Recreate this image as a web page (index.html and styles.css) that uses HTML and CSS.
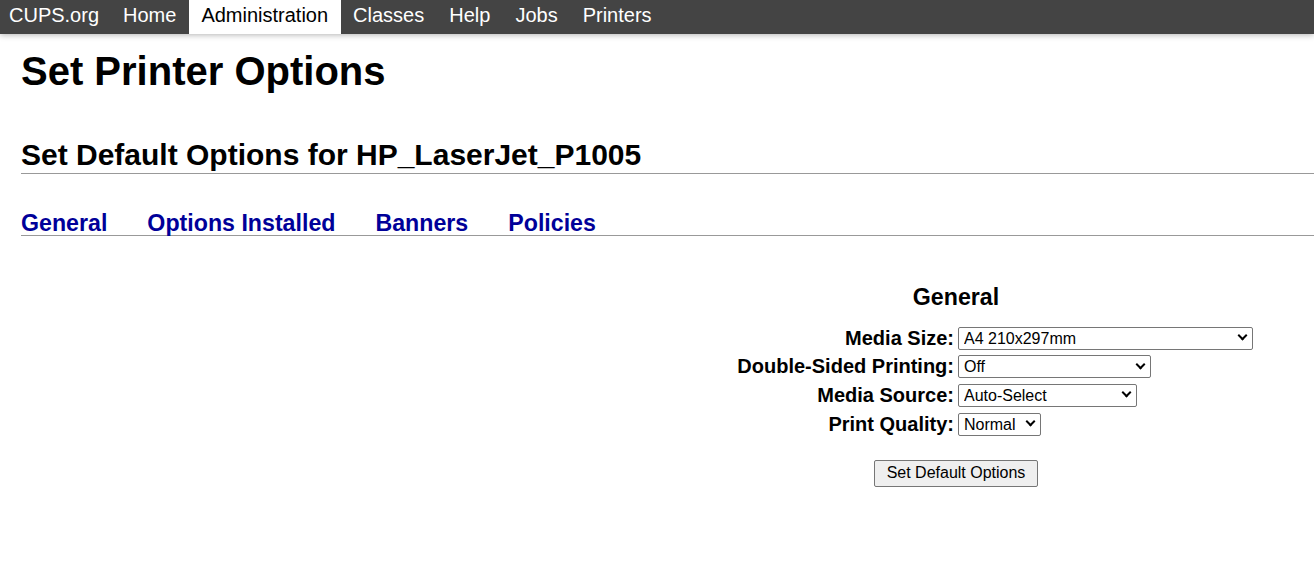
FILE: index.html
```html
<!DOCTYPE html>
<html lang="en">
<head>
  <meta charset="UTF-8">
  <title>Set Printer Options - CUPS</title>
  <link rel="stylesheet" href="styles.css">
</head>
<body>
  <header class="header">
    <nav class="nav">
      <a href="#" class="nav-link nav-brand">CUPS.org</a>
      <a href="#" class="nav-link">Home</a>
      <a href="#" class="nav-link active">Administration</a>
      <a href="#" class="nav-link">Classes</a>
      <a href="#" class="nav-link">Help</a>
      <a href="#" class="nav-link">Jobs</a>
      <a href="#" class="nav-link">Printers</a>
    </nav>
  </header>

  <main class="page">
    <h1 class="title">Set Printer Options</h1>
    <h2 class="subtitle">Set Default Options for HP_LaserJet_P1005</h2>

    <div class="tabs">
      <a href="#" class="tab">General</a>
      <a href="#" class="tab">Options Installed</a>
      <a href="#" class="tab">Banners</a>
      <a href="#" class="tab">Policies</a>
    </div>

    <form class="options">
      <h3 class="options-title">General</h3>
      <div class="options-grid">
        <label class="option-label" for="media">Media Size:</label>
        <span class="select-wrap">
          <select id="media" class="select select-media">
            <option>A4 210x297mm</option>
          </select>
        </span>

        <label class="option-label" for="duplex">Double-Sided Printing:</label>
        <span class="select-wrap">
          <select id="duplex" class="select select-duplex">
            <option>Off</option>
          </select>
        </span>

        <label class="option-label" for="source">Media Source:</label>
        <span class="select-wrap">
          <select id="source" class="select select-source">
            <option>Auto-Select</option>
          </select>
        </span>

        <label class="option-label" for="quality">Print Quality:</label>
        <span class="select-wrap">
          <select id="quality" class="select select-quality">
            <option>Normal</option>
          </select>
        </span>
      </div>
      <div class="options-actions">
        <button type="button" class="button">Set Default Options</button>
      </div>
    </form>
  </main>
</body>
</html>
```

FILE: styles.css
```css
body {
  margin: 0;
  font-family: "Liberation Sans", Arial, sans-serif;
  color: #000;
  background: #fff;
}

/* top navigation bar */
.header {
  background: #444;
  height: 34px;
  box-shadow: 0 1px 6px rgba(0, 0, 0, 0.3);
  position: relative;
}
.nav {
  display: flex;
  height: 100%;
}
.nav-link {
  display: block;
  padding: 0 12.5px;
  line-height: 30px;
  font-size: 20px;
  color: #fff;
  text-decoration: none;
}
.nav-brand {
  padding-left: 9px;
  padding-right: 11.5px;
}
.nav-link.active {
  background: #fff;
  color: #000;
}

/* page content */
.page {
  padding-left: 21px;
}
.title {
  font-size: 40px;
  font-weight: bold;
  margin: 15px 0 0;
}
.subtitle {
  font-size: 30px;
  font-weight: bold;
  margin: 44px 0 0;
  padding-bottom: 1px;
  border-bottom: 1px solid #999;
  line-height: 34px;
}
.tabs {
  display: flex;
  gap: 40px;
  margin-top: 36.5px;
  border-bottom: 1px solid #999;
}
.tab {
  font-size: 23.2px;
  line-height: 24px;
  font-weight: bold;
  color: #009;
  text-decoration: none;
}

/* option form */
.options {
  width: 676px;
  margin: 48px 20px 0 auto;
}
.options-title {
  font-size: 23.2px;
  font-weight: bold;
  text-align: center;
  margin: 0 0 16px;
}
.options-grid {
  display: grid;
  grid-template-columns: 1fr 1fr;
  grid-auto-rows: 23px;
  column-gap: 4px;
  row-gap: 5.7px;
  align-items: center;
}
.option-label {
  font-size: 20px;
  font-weight: bold;
  text-align: right;
}
.select-wrap {
  position: relative;
  justify-self: start;
}
.select-wrap::after {
  content: "";
  position: absolute;
  right: 7.5px;
  top: 50%;
  margin-top: -6px;
  width: 5px;
  height: 5px;
  border: solid #000;
  border-width: 0 2px 2px 0;
  transform: rotate(45deg);
  pointer-events: none;
}
.select {
  appearance: none;
  -webkit-appearance: none;
  display: block;
  height: 23px;
  padding: 0 20px 0 5px;
  border: 1px solid #767676;
  border-radius: 2px;
  background: #fff;
  color: #000;
  font-family: "Liberation Sans", Arial, sans-serif;
  font-size: 16px;
}
.select-media { width: 295px; }
.select-duplex { width: 193px; }
.select-source { width: 179px; }
.select-quality { width: 83px; }

.options-actions {
  text-align: center;
  margin-top: 24px;
}
.button {
  font-family: "Liberation Sans", Arial, sans-serif;
  font-size: 16px;
  color: #000;
  background: #efefef;
  border: 1px solid #767676;
  border-radius: 2px;
  padding: 3px 12px 4px;
}
```
